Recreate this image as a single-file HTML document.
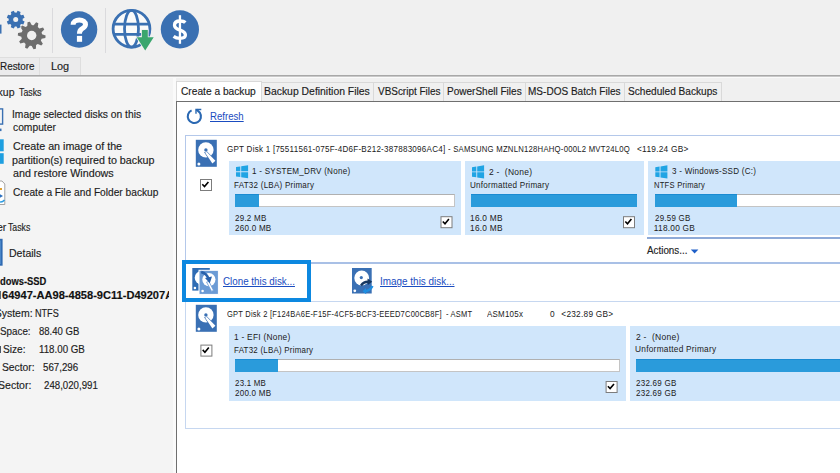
<!DOCTYPE html>
<html><head><meta charset="utf-8">
<style>
*{margin:0;padding:0;box-sizing:border-box}
html,body{width:840px;height:473px;overflow:hidden;background:#f0f0f0;font-family:"Liberation Sans",sans-serif}
.a{position:absolute}
.t{position:absolute;white-space:pre}
.k{-webkit-text-stroke:0.15px currentColor}
svg{position:absolute;left:0;top:0}
</style></head><body>
<div class='a' style='left:0;top:0;width:840px;height:57px;background:#f0f0f0'></div>
<div class='a' style='left:52px;top:8px;width:1px;height:45px;background:#dadadd'></div>
<div class='a' style='left:105px;top:8px;width:1px;height:45px;background:#dadadd'></div>
<div class='a' style='left:0;top:57px;width:840px;height:19px;background:#f0f0f0'></div>
<div class='a' style='left:-2px;top:57px;width:42px;height:19px;border:1px solid #dedede;border-bottom:none;background:#ebebec'></div>
<div class='a' style='left:39px;top:57px;width:42px;height:19px;border:1px solid #dedede;border-bottom:none;background:#ebebec'></div>
<div class='t k' style='left:-0.04px;top:59px;font-size:10.5px;font-weight:normal;line-height:14px;color:#1c1c1c;transform:scaleX(0.9417);transform-origin:0 0;'>Restore</div>
<div class='t k' style='left:50.96px;top:59px;font-size:10.5px;font-weight:normal;line-height:14px;color:#1c1c1c;transform:scaleX(1.0375);transform-origin:0 0;'>Log</div>
<div class='a' style='left:0;top:75px;width:840px;height:1px;background:#a8a8a8'></div><div class='a' style='left:0;top:76px;width:840px;height:1px;background:#c8c8c8'></div>
<div class='a' style='left:0;top:77px;width:840px;height:1px;background:#fafafa'></div>
<div class='a' style='left:0;top:78px;width:173px;height:395px;background:#f4f4f4'></div>
<div class='a' style='left:172.7px;top:78px;width:3.3px;height:395px;background:#fafafa'></div>
<div style='position:absolute;left:0;top:0;width:168.5px;height:473px;overflow:hidden'>
<div class='t k' style='left:-7.70px;top:85px;font-size:10.5px;font-weight:normal;line-height:14px;color:#1c1c1c;'>ckup</div>
<div class='t k' style='left:18.50px;top:85px;font-size:10.5px;font-weight:normal;line-height:14px;color:#1c1c1c;transform:scaleX(0.8370);transform-origin:0 0;'>Tasks</div>
<div class='t k' style='left:12.22px;top:107px;font-size:10.5px;font-weight:normal;line-height:14px;color:#1c1c1c;transform:scaleX(0.9786);transform-origin:0 0;'>Image selected disks on this</div>
<div class='t k' style='left:13.20px;top:120px;font-size:10.5px;font-weight:normal;line-height:14px;color:#1c1c1c;transform:scaleX(0.9786);transform-origin:0 0;'>computer</div>
<div class='t k' style='left:12.90px;top:139px;font-size:10.5px;font-weight:normal;line-height:14px;color:#1c1c1c;transform:scaleX(1.0210);transform-origin:0 0;'>Create an image of the</div>
<div class='t k' style='left:11.88px;top:153px;font-size:10.5px;font-weight:normal;line-height:14px;color:#1c1c1c;transform:scaleX(1.0210);transform-origin:0 0;'>partition(s) required to backup</div>
<div class='t k' style='left:12.90px;top:166px;font-size:10.5px;font-weight:normal;line-height:14px;color:#1c1c1c;transform:scaleX(1.0210);transform-origin:0 0;'>and restore Windows</div>
<div class='t k' style='left:12.50px;top:185px;font-size:10.5px;font-weight:normal;line-height:14px;color:#1c1c1c;transform:scaleX(0.9693);transform-origin:0 0;'>Create a File and Folder backup</div>
<div class='t k' style='left:-3.10px;top:220px;font-size:10.5px;font-weight:normal;line-height:14px;color:#1c1c1c;'>er</div>
<div class='t k' style='left:8.10px;top:220px;font-size:10.5px;font-weight:normal;line-height:14px;color:#1c1c1c;transform:scaleX(0.8296);transform-origin:0 0;'>Tasks</div>
<div class='t k' style='left:8.60px;top:246px;font-size:10.5px;font-weight:normal;line-height:14px;color:#1c1c1c;transform:scaleX(1.0032);transform-origin:0 0;'>Details</div>
<div class='t k' style='left:0.20px;top:275px;font-size:10.3px;font-weight:bold;line-height:13px;color:#111;transform:scaleX(0.9098);transform-origin:0 0;'>dows-SSD</div>
<div class='t k' style='left:-5.30px;top:306px;font-size:10.5px;font-weight:normal;line-height:14px;color:#1c1c1c;'>System:</div>
<div class='t k' style='left:34.93px;top:306px;font-size:10.5px;font-weight:normal;line-height:14px;color:#1c1c1c;transform:scaleX(0.8654);transform-origin:0 0;'>NTFS</div>
<div class='t k' style='left:0.46px;top:324px;font-size:10.5px;font-weight:normal;line-height:14px;color:#1c1c1c;transform:scaleX(0.9355);transform-origin:0 0;'>Space:</div>
<div class='t k' style='left:39.20px;top:324px;font-size:10.5px;font-weight:normal;line-height:14px;color:#1c1c1c;transform:scaleX(0.9068);transform-origin:0 0;'>88.40 GB</div>
<div class='t k' style='left:3.24px;top:342px;font-size:10.5px;font-weight:normal;line-height:14px;color:#1c1c1c;transform:scaleX(0.9636);transform-origin:0 0;'>Size:</div>
<div class='t k' style='left:39.07px;top:342px;font-size:10.5px;font-weight:normal;line-height:14px;color:#1c1c1c;transform:scaleX(0.9271);transform-origin:0 0;'>118.00 GB</div>
<div class='t k' style='left:2.42px;top:360px;font-size:10.5px;font-weight:normal;line-height:14px;color:#1c1c1c;transform:scaleX(0.9806);transform-origin:0 0;'>Sector:</div>
<div class='t k' style='left:42.60px;top:360px;font-size:10.5px;font-weight:normal;line-height:14px;color:#1c1c1c;transform:scaleX(0.9263);transform-origin:0 0;'>567,296</div>
<div class='t k' style='left:-1.90px;top:378px;font-size:10.5px;font-weight:normal;line-height:14px;color:#1c1c1c;'>Sector:</div>
<div class='t k' style='left:44.30px;top:378px;font-size:10.5px;font-weight:normal;line-height:14px;color:#1c1c1c;transform:scaleX(0.9207);transform-origin:0 0;'>248,020,991</div>
<div class='t k' style='left:1.50px;top:289px;font-size:10.3px;font-weight:bold;line-height:13px;color:#111;transform:scaleX(1.0757);transform-origin:0 0;'>64947-AA98-4858-9C11-D49207A</div>
<div class='a' style='left:0;top:346px;width:1.2px;height:7px;background:#4a5868'></div><div class='a' style='left:0;top:291px;width:1px;height:8px;background:#5a6a7a'></div>
</div>
<div class='a' style='left:176px;top:78px;width:664px;height:23px;background:#f0f0f0'></div>
<div class='a' style='left:261px;top:82px;width:113px;height:19px;background:#f0f0f0;border:1px solid #d9d9d9;border-bottom:none'></div>
<div class='a' style='left:373px;top:82px;width:71px;height:19px;background:#f0f0f0;border:1px solid #d9d9d9;border-bottom:none'></div>
<div class='a' style='left:443px;top:82px;width:83px;height:19px;background:#f0f0f0;border:1px solid #d9d9d9;border-bottom:none'></div>
<div class='a' style='left:525px;top:82px;width:100px;height:19px;background:#f0f0f0;border:1px solid #d9d9d9;border-bottom:none'></div>
<div class='a' style='left:624px;top:82px;width:98px;height:19px;background:#f0f0f0;border:1px solid #d9d9d9;border-bottom:none'></div>
<div class='a' style='left:176px;top:81px;width:86px;height:21px;background:#fff;border:1px solid #d9d9d9;border-bottom:none'></div>
<div class='t k' style='left:181.00px;top:84px;font-size:10.5px;font-weight:normal;line-height:14px;color:#1c1c1c;transform:scaleX(0.9701);transform-origin:0 0;'>Create a backup</div>
<div class='t k' style='left:263.51px;top:84px;font-size:10.5px;font-weight:normal;line-height:14px;color:#1c1c1c;transform:scaleX(0.9906);transform-origin:0 0;'>Backup Definition Files</div>
<div class='t k' style='left:377.50px;top:84px;font-size:10.5px;font-weight:normal;line-height:14px;color:#1c1c1c;transform:scaleX(0.9470);transform-origin:0 0;'>VBScript Files</div>
<div class='t k' style='left:446.95px;top:84px;font-size:10.5px;font-weight:normal;line-height:14px;color:#1c1c1c;transform:scaleX(0.9545);transform-origin:0 0;'>PowerShell Files</div>
<div class='t k' style='left:528.34px;top:84px;font-size:10.5px;font-weight:normal;line-height:14px;color:#1c1c1c;transform:scaleX(0.9552);transform-origin:0 0;'>MS-DOS Batch Files</div>
<div class='t k' style='left:628.34px;top:84px;font-size:10.5px;font-weight:normal;line-height:14px;color:#1c1c1c;transform:scaleX(0.9630);transform-origin:0 0;'>Scheduled Backups</div>
<div class='a' style='left:176px;top:101px;width:700px;height:400px;background:#fff;border:1px solid #6f6f6f'></div>
<div class='t' style='left:209.50px;top:109px;font-size:10.6px;font-weight:normal;line-height:14px;color:#1a4cc0;transform:scaleX(0.9081);transform-origin:0 0;text-decoration:underline'>Refresh</div>
<div class='a' style='left:185px;top:135px;width:700px;height:129px;border:1px solid #b4c8ea'></div>
<div class='a' style='left:185px;top:262px;width:700px;height:2px;background:#a9c0e6'></div>
<div class='t' style='left:226.80px;top:144px;font-size:8.3px;font-weight:normal;line-height:11px;color:#202020;transform:scaleX(0.9705);transform-origin:0 0;letter-spacing:0.25px'>GPT Disk 1 [75511561-075F-4D6F-B212-387883096AC4]</div>
<div class='t' style='left:448.20px;top:144px;font-size:8.3px;font-weight:normal;line-height:11px;color:#202020;transform:scaleX(0.9308);transform-origin:0 0;letter-spacing:0.25px'>- SAMSUNG MZNLN128HAHQ-000L2 MVT24L0Q</div>
<div class='t' style='left:636.60px;top:144px;font-size:8.3px;font-weight:normal;line-height:11px;color:#202020;transform:scaleX(1.0039);transform-origin:0 0;letter-spacing:0.25px'>&lt;119.24 GB&gt;</div>
<div class='a' style='left:229px;top:161px;width:232px;height:74px;background:#d0e6fb'></div>
<div class='a' style='left:465px;top:161px;width:179px;height:74px;background:#d0e6fb'></div>
<div class='a' style='left:648px;top:161px;width:200px;height:74px;background:#d0e6fb'></div>
<div class='a' style='left:647px;top:237px;width:200px;height:2px;background:#8eaad8'></div>
<div class='a' style='left:235px;top:194px;width:220px;height:13px;background:#fff;border:1px solid #c4c4c4;border-top-color:#b0b0b0'></div>
<div class='a' style='left:235px;top:194px;width:24px;height:13px;background:#2a9bdb;border-top:1px solid #1a8bd2'></div>
<div class='a' style='left:471px;top:194px;width:166px;height:13px;background:#fff;border:1px solid #c4c4c4;border-top-color:#b0b0b0'></div>
<div class='a' style='left:471px;top:194px;width:166px;height:13px;background:#2a9bdb;border-top:1px solid #1a8bd2'></div>
<div class='a' style='left:655px;top:194px;width:200px;height:13px;background:#fff;border:1px solid #c4c4c4;border-top-color:#b0b0b0'></div>
<div class='a' style='left:655px;top:194px;width:82px;height:13px;background:#2a9bdb;border-top:1px solid #1a8bd2'></div>
<div class='t' style='left:251.63px;top:166px;font-size:8.3px;font-weight:normal;line-height:11px;color:#202020;transform:scaleX(0.9737);transform-origin:0 0;letter-spacing:0.25px'>1 - SYSTEM_DRV (None)</div>
<div class='t' style='left:234.13px;top:180px;font-size:8.3px;font-weight:normal;line-height:11px;color:#202020;transform:scaleX(0.9671);transform-origin:0 0;letter-spacing:0.25px'>FAT32 (LBA) Primary</div>
<div class='t' style='left:235.10px;top:213px;font-size:8.3px;font-weight:normal;line-height:11px;color:#202020;transform:scaleX(0.9656);transform-origin:0 0;letter-spacing:0.25px'>29.2 MB</div>
<div class='t' style='left:235.10px;top:223px;font-size:8.3px;font-weight:normal;line-height:11px;color:#202020;transform:scaleX(0.9730);transform-origin:0 0;letter-spacing:0.25px'>260.0 MB</div>
<div class='t' style='left:488.50px;top:167px;font-size:8.3px;font-weight:normal;line-height:11px;color:#202020;transform:scaleX(1.0190);transform-origin:0 0;letter-spacing:0.25px'>2 -  (None)</div>
<div class='t' style='left:470.42px;top:180px;font-size:8.3px;font-weight:normal;line-height:11px;color:#202020;transform:scaleX(0.9763);transform-origin:0 0;letter-spacing:0.25px'>Unformatted Primary</div>
<div class='t' style='left:470.40px;top:213px;font-size:8.3px;font-weight:normal;line-height:11px;color:#202020;transform:scaleX(1.0032);transform-origin:0 0;letter-spacing:0.25px'>16.0 MB</div>
<div class='t' style='left:470.40px;top:223px;font-size:8.3px;font-weight:normal;line-height:11px;color:#202020;transform:scaleX(1.0032);transform-origin:0 0;letter-spacing:0.25px'>16.0 MB</div>
<div class='t' style='left:671.90px;top:166px;font-size:8.3px;font-weight:normal;line-height:11px;color:#202020;transform:scaleX(0.9721);transform-origin:0 0;letter-spacing:0.25px'>3 - Windows-SSD (C:)</div>
<div class='t' style='left:653.88px;top:180px;font-size:8.3px;font-weight:normal;line-height:11px;color:#202020;transform:scaleX(0.9185);transform-origin:0 0;letter-spacing:0.25px'>NTFS Primary</div>
<div class='t' style='left:654.80px;top:213px;font-size:8.3px;font-weight:normal;line-height:11px;color:#202020;transform:scaleX(0.9568);transform-origin:0 0;letter-spacing:0.25px'>29.59 GB</div>
<div class='t' style='left:653.80px;top:223px;font-size:8.3px;font-weight:normal;line-height:11px;color:#202020;letter-spacing:0.25px'>118.00 GB</div>
<div class='t k' style='left:647.10px;top:243px;font-size:10.6px;font-weight:normal;line-height:14px;color:#222;transform:scaleX(0.9279);transform-origin:0 0;'>Actions...</div>
<div class='a' style='left:185px;top:301px;width:700px;height:128px;border:1px solid #c6d7f0'></div>
<div class='t' style='left:227.00px;top:309px;font-size:8.3px;font-weight:normal;line-height:11px;color:#202020;transform:scaleX(0.9064);transform-origin:0 0;letter-spacing:0.25px'>GPT Disk 2 [F124BA6E-F15F-4CF5-BCF3-EEED7C00CB8F]</div>
<div class='t' style='left:445.50px;top:309px;font-size:8.3px;font-weight:normal;line-height:11px;color:#202020;transform:scaleX(0.9034);transform-origin:0 0;letter-spacing:0.25px'>- ASMT</div>
<div class='t' style='left:486.60px;top:309px;font-size:8.3px;font-weight:normal;line-height:11px;color:#202020;transform:scaleX(0.9568);transform-origin:0 0;letter-spacing:0.25px'>ASM105x</div>
<div class='t' style='left:549.90px;top:309px;font-size:8.3px;font-weight:normal;line-height:11px;color:#202020;letter-spacing:0.25px'>0</div>
<div class='t' style='left:561.30px;top:309px;font-size:8.3px;font-weight:normal;line-height:11px;color:#202020;letter-spacing:0.25px'>&lt;232.89 GB&gt;</div>
<div class='a' style='left:228.5px;top:326px;width:397.5px;height:74.5px;background:#d0e6fb'></div>
<div class='a' style='left:630px;top:326px;width:220px;height:74.5px;background:#d0e6fb'></div>
<div class='a' style='left:235px;top:359px;width:385px;height:13px;background:#fff;border:1px solid #c4c4c4;border-top-color:#b0b0b0'></div>
<div class='a' style='left:235px;top:359px;width:43px;height:13px;background:#2a9bdb;border-top:1px solid #1a8bd2'></div>
<div class='a' style='left:636px;top:359px;width:220px;height:13px;background:#fff;border:1px solid #c4c4c4;border-top-color:#b0b0b0'></div>
<div class='a' style='left:636px;top:359px;width:220px;height:13px;background:#2a9bdb;border-top:1px solid #1a8bd2'></div>
<div class='t' style='left:234.29px;top:332px;font-size:8.3px;font-weight:normal;line-height:11px;color:#202020;transform:scaleX(1.0074);transform-origin:0 0;letter-spacing:0.25px'>1 - EFI (None)</div>
<div class='t' style='left:234.34px;top:345px;font-size:8.3px;font-weight:normal;line-height:11px;color:#202020;transform:scaleX(0.9561);transform-origin:0 0;letter-spacing:0.25px'>FAT32 (LBA) Primary</div>
<div class='t' style='left:235.30px;top:378px;font-size:8.3px;font-weight:normal;line-height:11px;color:#202020;transform:scaleX(0.9531);transform-origin:0 0;letter-spacing:0.25px'>23.1 MB</div>
<div class='t' style='left:235.30px;top:388px;font-size:8.3px;font-weight:normal;line-height:11px;color:#202020;transform:scaleX(0.9676);transform-origin:0 0;letter-spacing:0.25px'>200.0 MB</div>
<div class='t' style='left:636.10px;top:332px;font-size:8.3px;font-weight:normal;line-height:11px;color:#202020;transform:scaleX(1.0262);transform-origin:0 0;letter-spacing:0.25px'>2 -  (None)</div>
<div class='t' style='left:635.10px;top:344px;font-size:8.3px;font-weight:normal;line-height:11px;color:#202020;letter-spacing:0.25px'>Unformatted Primary</div>
<div class='t' style='left:636.10px;top:378px;font-size:8.3px;font-weight:normal;line-height:11px;color:#202020;transform:scaleX(0.9667);transform-origin:0 0;letter-spacing:0.25px'>232.69 GB</div>
<div class='t' style='left:636.10px;top:388px;font-size:8.3px;font-weight:normal;line-height:11px;color:#202020;transform:scaleX(0.9667);transform-origin:0 0;letter-spacing:0.25px'>232.69 GB</div>
<div class='a' style='left:182px;top:260px;width:129px;height:42px;border:4px solid #0d88e0;background:#fff'></div>
<div class='t' style='left:223.30px;top:274px;font-size:10.6px;font-weight:normal;line-height:14px;color:#1a4cc0;transform:scaleX(0.9256);transform-origin:0 0;text-decoration:underline'>Clone this disk...</div>
<div class='t' style='left:380.00px;top:274px;font-size:10.6px;font-weight:normal;line-height:14px;color:#1a4cc0;transform:scaleX(0.9375);transform-origin:0 0;text-decoration:underline'>Image this disk...</div>
<svg width='840' height='473' viewBox='0 0 840 473'><rect x='0' y='24.6' width='1.5' height='9' fill='#3a70b2'/><path d='M41.85 33.25 L42.02 34.23 L45.60 35.62 L45.37 38.03 L41.59 38.71 L41.24 39.65 L40.80 40.54 L42.87 43.77 L41.27 45.58 L37.81 43.91 L36.98 44.46 L36.10 44.93 L35.88 48.76 L33.51 49.28 L31.70 45.90 L30.70 45.85 L29.72 45.71 L27.29 48.68 L25.07 47.72 L25.59 43.91 L24.81 43.29 L24.09 42.59 L20.38 43.57 L19.15 41.48 L21.81 38.71 L21.55 37.75 L21.38 36.77 L17.80 35.38 L18.03 32.97 L21.81 32.29 L22.16 31.35 L22.60 30.46 L20.53 27.23 L22.13 25.42 L25.59 27.09 L26.42 26.54 L27.30 26.07 L27.52 22.24 L29.89 21.72 L31.70 25.10 L32.70 25.15 L33.68 25.29 L36.11 22.32 L38.33 23.28 L37.81 27.09 L38.59 27.71 L39.31 28.41 L43.02 27.43 L44.25 29.52 L41.59 32.29Z' fill='#6d6d6d'/><circle cx='31.7' cy='35.5' r='4.7' fill='#f0f0f0'/><path d='M22.70 19.60 L22.66 20.39 L24.58 21.57 L23.37 24.49 L21.18 23.96 L20.65 24.55 L20.06 25.08 L20.59 27.27 L17.67 28.48 L16.49 26.56 L15.70 26.60 L14.91 26.56 L13.73 28.48 L10.81 27.27 L11.34 25.08 L10.75 24.55 L10.22 23.96 L8.03 24.49 L6.82 21.57 L8.74 20.39 L8.70 19.60 L8.74 18.81 L6.82 17.63 L8.03 14.71 L10.22 15.24 L10.75 14.65 L11.34 14.12 L10.81 11.93 L13.73 10.72 L14.91 12.64 L15.70 12.60 L16.49 12.64 L17.67 10.72 L20.59 11.93 L20.06 14.12 L20.65 14.65 L21.18 15.24 L23.37 14.71 L24.58 17.63 L22.66 18.81Z' fill='#3a70b2' stroke='#f0f0f0' stroke-width='1.4' paint-order='stroke'/><circle cx='15.7' cy='19.6' r='2.5' fill='#f0f0f0'/><circle cx='79.1' cy='29.55' r='18.2' fill='#3a70b2'/><path d='M73.1 24.8 C73.1 21.9 75.8 20 79.3 20 C83 20 85.5 22 85.5 24.6 C85.5 27 83.6 28 81.8 29 C80 30 79.45 31 79.45 33.7' fill='none' stroke='#fff' stroke-width='5'/><rect x='76.9' y='35.9' width='5.2' height='5.9' fill='#fff'/><circle cx='131.5' cy='28.7' r='18.4' fill='#fafafa'/><g fill='none' stroke='#3a70b2' stroke-width='2.8'><circle cx='131.5' cy='28.7' r='18.4'/><ellipse cx='131.5' cy='28.7' rx='7' ry='18.4'/><line x1='113' y1='24.2' x2='150' y2='24.2'/><line x1='113' y1='34.3' x2='150' y2='34.3'/></g><path d='M141.9 30.1 H147.8 V37.3 H153.7 L145.2 50.4 L136.7 37.3 H141.9Z' fill='#3aa66e' stroke='#f0f0f0' stroke-width='1.6' paint-order='stroke'/><circle cx='179.9' cy='29.4' r='19.1' fill='#3a70b2'/><path d='M185.3 22.6 C184.2 21.4 182.4 21 179.9 21 C176.6 21 174.5 22.6 174.5 25.3 C174.5 28.2 177 29.1 180 30.1 C183.2 31.2 185.4 32.4 185.4 35.1 C185.4 37.6 183.2 38.3 179.9 38.3 C177.2 38.3 175.2 37.6 173.6 36.4' fill='none' stroke='#fff' stroke-width='3.3'/><rect x='178.8' y='15.2' width='2.3' height='28.6' fill='#fff'/><rect x='-3' y='108.9' width='5.6' height='15.2' fill='none' stroke='#3a70b2' stroke-width='1.4'/><rect x='-1' y='128.6' width='2.5' height='2.5' fill='#3a70b2'/><rect x='-2' y='139.3' width='5.7' height='12' fill='#1e9fe0'/><rect x='-2' y='153.2' width='5.7' height='10.6' fill='#1e9fe0'/><path d='M-4 181 H2 L4.8 184 V204.5 H-4Z' fill='#fff' stroke='#9a9a9a' stroke-width='0.9'/><path d='M-2 193 L3 196 L-2 199Z' fill='#2a6fc0'/><path d='M-3 200 Q1 204 4.5 200' fill='none' stroke='#2a9ae0' stroke-width='1.4'/><rect x='-2' y='188' width='4' height='2' fill='#e0a030'/><rect x='-2' y='238.8' width='4.6' height='26.9' fill='#2f6ab2'/><rect x='-2' y='240.5' width='3' height='23.5' fill='#4a86c8'/><path d='M191.6 110.4 A6.6 6.6 0 1 0 199.9 112.8 L196.4 109.6' fill='none' stroke='#2a68b2' stroke-width='2.1'/><path d='M195.3 108.8 H201.3 V110.3 H196.7 V113.8 H195.3Z' fill='#2a68b2'/><rect x='195.8' y='139.8' width='21' height='27' fill='#3a70b4'/><circle cx='205.9' cy='149.9' r='7.7' fill='#fff'/><path d='M205.00 152.50 L206.90 152.00 L215.40 160.80 L212.40 163.60Z' fill='#fff' stroke='#3a70b4' stroke-width='1.1' paint-order='stroke'/><circle cx='205.9' cy='149.9' r='1.7' fill='#3a70b4'/><circle cx='198.9' cy='163.9' r='1.5' fill='#fff'/><rect x='195.8' y='304.8' width='21' height='27' fill='#3a70b4'/><circle cx='205.9' cy='314.90000000000003' r='7.7' fill='#fff'/><path d='M205.00 317.50 L206.90 317.00 L215.40 325.80 L212.40 328.60Z' fill='#fff' stroke='#3a70b4' stroke-width='1.1' paint-order='stroke'/><circle cx='205.9' cy='314.90000000000003' r='1.7' fill='#3a70b4'/><circle cx='198.9' cy='328.90000000000003' r='1.5' fill='#fff'/><rect x='200.5' y='179.5' width='11' height='11' fill='#fff' stroke='#7c7c7c' stroke-width='1'/><path d='M202.30 184.30 L204.50 186.60 L208.40 181.90' fill='none' stroke='#000' stroke-width='1.6'/><rect x='441.0' y='216.7' width='11' height='11' fill='#fff' stroke='#7c7c7c' stroke-width='1'/><path d='M442.80 221.50 L445.00 223.80 L448.90 219.10' fill='none' stroke='#000' stroke-width='1.6'/><rect x='623.5' y='216.7' width='11' height='11' fill='#fff' stroke='#7c7c7c' stroke-width='1'/><path d='M625.30 221.50 L627.50 223.80 L631.40 219.10' fill='none' stroke='#000' stroke-width='1.6'/><rect x='200.9' y='345.1' width='11' height='11' fill='#fff' stroke='#7c7c7c' stroke-width='1'/><path d='M202.70 349.90 L204.90 352.20 L208.80 347.50' fill='none' stroke='#000' stroke-width='1.6'/><rect x='606.1' y='381.5' width='11' height='11' fill='#fff' stroke='#7c7c7c' stroke-width='1'/><path d='M607.90 386.30 L610.10 388.60 L614.00 383.90' fill='none' stroke='#000' stroke-width='1.6'/><path d='M236 167.1 L240.3 166.5 V171.29999999999998 H236Z M241.2 166.35 L248.1 165.2 V171.29999999999998 H241.2Z M236 172.2 H240.3 V177.1 L236 176.6Z M241.2 172.2 H248.1 V178.29999999999998 L241.2 177.29999999999998Z' fill='#20a4e4'/><path d='M472 167.20000000000002 L476.3 166.60000000000002 V171.4 H472Z M477.2 166.45000000000002 L484.1 165.3 V171.4 H477.2Z M472 172.3 H476.3 V177.20000000000002 L472 176.70000000000002Z M477.2 172.3 H484.1 V178.4 L477.2 177.4Z' fill='#20a4e4'/><path d='M655.3 167.20000000000002 L659.5999999999999 166.60000000000002 V171.4 H655.3Z M660.5 166.45000000000002 L667.4 165.3 V171.4 H660.5Z M655.3 172.3 H659.5999999999999 V177.20000000000002 L655.3 176.70000000000002Z M660.5 172.3 H667.4 V178.4 L660.5 177.4Z' fill='#20a4e4'/><path d='M690.8 249.6 H698.4 L694.6 253.6Z' fill='#1e5fc8'/><rect x='192.3' y='268' width='17.5' height='22.6' fill='#2f6cb4'/><circle cx='201.5' cy='277.8' r='6.8' fill='#fff'/><circle cx='194.9' cy='288' r='1.3' fill='#fff'/><rect x='199' y='270.3' width='19.4' height='24.1' fill='#6b9bd5' stroke='#fff' stroke-width='1'/><circle cx='208.9' cy='279.6' r='6.6' fill='#fff'/><path d='M206.5 282 L209 281.5 L213.5 290.3 L211.6 291.4Z' fill='#fff' stroke='#6b9bd5' stroke-width='0.8'/><circle cx='202.6' cy='291' r='1.3' fill='#fff'/><path d='M201.2 272 Q207 273.5 208.5 279' fill='none' stroke='#2a62ac' stroke-width='2.4'/><path d='M205 278 L212 276.5 L209.8 283.2Z' fill='#2a62ac'/><rect x='352' y='268' width='19.7' height='25.5' fill='#3a70b4'/><circle cx='361.7' cy='278' r='7.4' fill='#fff'/><circle cx='361.3' cy='277.6' r='1.6' fill='#3a70b4'/><circle cx='354.8' cy='290.8' r='1.4' fill='#fff'/><path d='M361 285.5 Q364 281.5 368.5 281.8' fill='none' stroke='#17375f' stroke-width='2.4'/><path d='M367.5 278.6 L372.2 281.8 L367.8 285Z' fill='#17375f'/><path d='M372.5 286 Q370 291 364.5 291.2' fill='none' stroke='#1e8ee0' stroke-width='2.4'/><path d='M366 288 L362.5 291.3 L366.2 294.2Z' fill='#1e8ee0'/></svg>
</body></html>
